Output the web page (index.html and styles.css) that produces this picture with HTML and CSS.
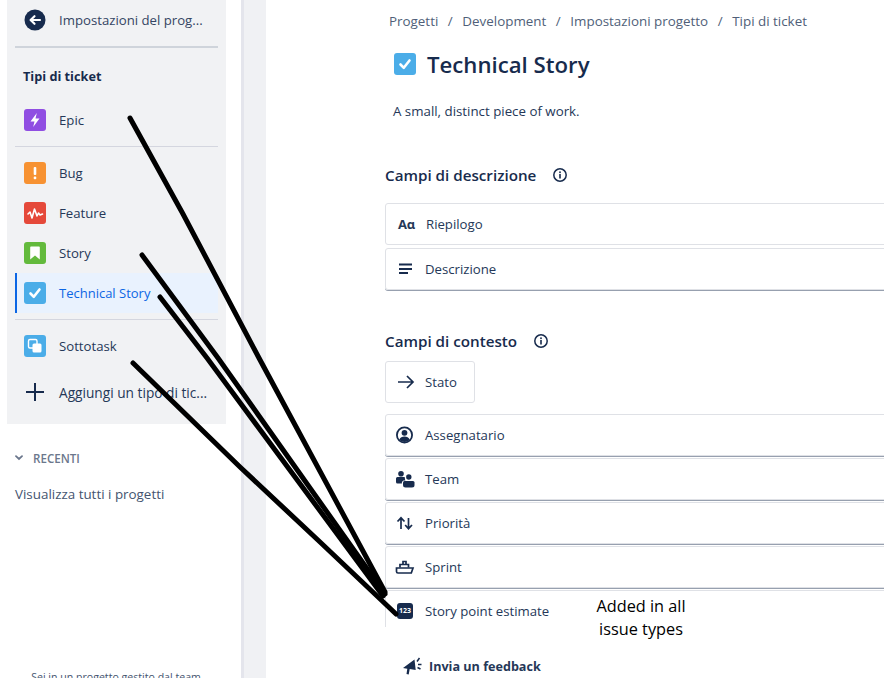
FILE: index.html
```html
<!DOCTYPE html>
<html lang="it">
<head>
  <meta charset="UTF-8" />
  <meta name="viewport" content="width=device-width, initial-scale=1" />
  <title>Tipi di ticket</title>
  <link rel="stylesheet" href="styles.css">
</head>
<body>
  <div class="app">
    <aside class="sidebar">
      <nav class="panel">
        <a class="nav-item back-item">
          <svg class="type-icon" viewBox="0 0 22 22"><circle cx="11" cy="11" r="10.5" fill="#172b4d"/><path d="M16 11H7M10.5 7.2 6.600 11l3.900 3.800" fill="none" stroke="#fff" stroke-width="2.200" stroke-linecap="round" stroke-linejoin="round"/></svg>
          <span>Impostazioni del prog...</span>
        </a>
        <div class="panel-title">Tipi di ticket</div>
        <a class="nav-item">
          <svg class="type-icon" viewBox="0 0 22 22"><rect width="22" height="22" rx="3" fill="#904ee2"/><path d="M12.800 4 6.500 12.400h4L9.200 18l6.300-8.400h-4z" fill="#fff"/></svg>
          <span>Epic</span>
        </a>
        <div class="nav-sep"></div>
        <a class="nav-item">
          <svg class="type-icon" viewBox="0 0 22 22"><rect width="22" height="22" rx="3" fill="#f79232"/><rect x="9.700" y="5" width="2.600" height="8" rx="1" fill="#fff"/><rect x="9.700" y="14.600" width="2.600" height="2.600" rx="1" fill="#fff"/></svg>
          <span>Bug</span>
        </a>
        <a class="nav-item">
          <svg class="type-icon" viewBox="0 0 22 22"><rect width="22" height="22" rx="3" fill="#e5493a"/><path d="m4 12 2-2 2 6 2.500-9 2.500 7 1.500-3 1.500 2 2.500-1" fill="none" stroke="#fff" stroke-width="1.600" stroke-linejoin="round" stroke-linecap="round"/></svg>
          <span>Feature</span>
        </a>
        <a class="nav-item">
          <svg class="type-icon" viewBox="0 0 22 22"><rect width="22" height="22" rx="3" fill="#63ba3c"/><path d="M7 4.500h8a.8.8 0 0 1 .8.8V17.500l-4.800-3.900-4.800 3.900V5.300A.8.8 0 0 1 7 4.500z" fill="#fff"/></svg>
          <span>Story</span>
        </a>
        <a class="nav-item active">
          <svg class="type-icon" viewBox="0 0 22 22"><rect width="22" height="22" rx="3" fill="#4bade8"/><path d="m6.500 11.500 3.300 3.300 5.700-7.300" fill="none" stroke="#fff" stroke-width="2.600" stroke-linecap="round" stroke-linejoin="round"/></svg>
          <span>Technical Story</span>
        </a>
        <div class="nav-sep"></div>
        <a class="nav-item">
          <svg class="type-icon" viewBox="0 0 22 22"><rect width="22" height="22" rx="3" fill="#4bade8"/><rect x="4.500" y="4.500" width="8.500" height="8.500" rx="1.500" fill="#4bade8" stroke="#fff" stroke-width="1.400"/><rect x="8.500" y="8.500" width="9" height="9" rx="1.500" fill="#fff"/></svg>
          <span>Sottotask</span>
        </a>
        <a class="nav-item add-item">
          <svg class="type-icon" viewBox="0 0 22 22"><path d="M11 2v18M2 11h18" stroke="#172b4d" stroke-width="2"/></svg>
          <span>Aggiungi un tipo di tic...</span>
        </a>
      </nav>

      <div class="recent-head">
        <svg class="chevron" viewBox="0 0 8 6"><path d="M1 1.200 4 4l3-2.800" fill="none" stroke="#6b778c" stroke-width="1.800" stroke-linecap="round"/></svg>
        <span>RECENTI</span>
      </div>
      <a class="recent-link">Visualizza tutti i progetti</a>
      <p class="team-note">Sei in un progetto gestito dal team</p>
    </aside>

    <div class="gutter"></div>

    <main class="content">
      <div class="breadcrumb">
        <span>Progetti</span><i>/</i><span>Development</span><i>/</i><span>Impostazioni progetto</span><i>/</i><span>Tipi di ticket</span>
      </div>
      <div class="title-row">
        <svg class="type-icon" viewBox="0 0 22 22"><rect width="22" height="22" rx="3" fill="#4bade8"/><path d="m6.500 11.500 3.300 3.300 5.700-7.300" fill="none" stroke="#fff" stroke-width="2.600" stroke-linecap="round" stroke-linejoin="round"/></svg>
        <h1>Technical Story</h1>
      </div>
      <p class="description">A small, distinct piece of work.</p>

      <h2 class="section-head first">Campi di descrizione
        <svg class="info" viewBox="0 0 16 16"><circle cx="8" cy="8" r="6.200" fill="none" stroke="#172b4d" stroke-width="1.500"/><rect x="7.200" y="7" width="1.600" height="4.500" fill="#172b4d"/><rect x="7.200" y="4.400" width="1.600" height="1.700" fill="#172b4d"/></svg>
      </h2>
      <div class="field-list spaced">
        <div class="field flat">
          <span class="field-icon aa">Aɑ</span>
          <span>Riepilogo</span>
        </div>
        <div class="field">
          <svg class="field-icon" viewBox="0 0 20 20"><path d="M4 5.500h13M4 10h13M4 14h9" stroke="#172b4d" stroke-width="2"/></svg>
          <span>Descrizione</span>
        </div>
      </div>

      <h2 class="section-head second">Campi di contesto
        <svg class="info" viewBox="0 0 16 16"><circle cx="8" cy="8" r="6.200" fill="none" stroke="#172b4d" stroke-width="1.500"/><rect x="7.200" y="7" width="1.600" height="4.500" fill="#172b4d"/><rect x="7.200" y="4.400" width="1.600" height="1.700" fill="#172b4d"/></svg>
      </h2>
      <div class="field flat status">
        <svg class="field-icon" viewBox="0 0 20 20"><path d="M3 10h15M12 4l6 6-6 6" fill="none" stroke="#172b4d" stroke-width="1.700"/></svg>
        <span>Stato</span>
      </div>
      <div class="field-list context">
        <div class="field">
          <svg class="field-icon" viewBox="0 0 20 20"><circle cx="9.500" cy="10" r="7.600" fill="#fff" stroke="#172b4d" stroke-width="1.800"/><circle cx="9.500" cy="7.800" r="2.900" fill="#172b4d"/><path d="M4.300 14.800c.8-2.200 2.800-3.300 5.200-3.300s4.400 1.100 5.200 3.300a7.300 7.300 0 0 1-10.400 0z" fill="#172b4d"/></svg>
          <span>Assegnatario</span>
        </div>
        <div class="field">
          <svg class="field-icon" viewBox="0 0 20 20"><circle cx="6" cy="4.800" r="2.800" fill="#172b4d"/><circle cx="13.800" cy="8" r="2.700" fill="#172b4d"/><path d="M1 9.500a1.500 1.500 0 0 1 1.500-1.500h6.500a1.500 1.500 0 0 1 1 .6 4 4 0 0 0 .4 3H8.500a2.500 2.500 0 0 0-1.600 1.700v1.200H2.500A1.500 1.500 0 0 1 1 13z" fill="#172b4d"/><path d="M8 13.500a1.500 1.500 0 0 1 1.500-1.500h8.500a1.500 1.500 0 0 1 1.500 1.500v2.500a2.500 2.500 0 0 1-2.500 2.500h-6.500A2.500 2.500 0 0 1 8 16z" fill="#172b4d"/></svg>
          <span>Team</span>
        </div>
        <div class="field">
          <svg class="field-icon" viewBox="0 0 20 20"><path d="M6 16V5M2.500 8.500 6 4.800l3.500 3.700M13.500 5v11M10.200 12l3.300 3.700 3.500-3.700" fill="none" stroke="#172b4d" stroke-width="1.700"/></svg>
          <span>Priorità</span>
        </div>
        <div class="field">
          <svg class="field-icon" viewBox="0 0 20 20"><path d="M1.500 11h16.500l-1.700 5H3a1.500 1.500 0 0 1-1.500-1.500z" fill="none" stroke="#172b4d" stroke-width="1.700"/><path d="M5 10.500V7.500h8.500v3M8 7V4.500h3V7" fill="none" stroke="#172b4d" stroke-width="1.700"/></svg>
          <span>Sprint</span>
        </div>
        <div class="field last">
          <span class="field-icon badge">123</span>
          <span>Story point estimate</span>
        </div>
      </div>

      <a class="feedback">
        <svg class="feedback-icon" viewBox="0 0 20 20"><path d="M1 12 12.500 3.500l1.200 10.500-6-1-1 5.500-2.200-.6.800-5.200-3-.5z" fill="#172b4d"/><path d="M15 5.500 17.500 2M16 8.500h3.500M15.500 11.500l3 1.500" fill="none" stroke="#172b4d" stroke-width="1.500"/></svg>
        <span>Invia un feedback</span>
      </a>
    </main>
  </div>

  <svg class="scribble" viewBox="0 0 884 678">
    <g fill="none" stroke="#000" stroke-width="5" stroke-linecap="round" stroke-linejoin="round">
      <path d="M130 118 183 214 259 358 385 592"/>
      <path d="M142 255 218 358 385 594"/>
      <path d="M160 297 207 358 383 596"/>
      <path d="M133 363 240 467 320 542 396 614"/>
    </g>
  </svg>
  <div class="annotation">Added in all<br>issue types</div>
</body>
</html>
```

FILE: styles.css
```css
* {
  box-sizing: border-box;
}

html, body {
  margin: 0;
  height: 678px;
  overflow: hidden;
  background: #fff;
}

body {
  position: relative;
  font-family: "Open Sans", "Noto Sans", sans-serif;
  font-size: 13.2px;
  color: #172b4d;
}

.app {
  display: flex;
  height: 678px;
}

.sidebar {
  width: 241px;
  flex: none;
  padding-left: 7px;
  overflow: hidden;
}

.gutter {
  width: 25px;
  flex: none;
  background: #f0f1f4;
  border-left: 3px solid #e4e5ec;
}

.content {
  flex: 1;
  min-width: 0;
  padding: 11px 0 0 119px;
  overflow: hidden;
}

/* left panel */
.panel {
  width: 219px;
  height: 424px;
  background: #f1f2f4;
  padding: 0 8px;
}

.nav-item {
  display: flex;
  align-items: center;
  gap: 13px;
  height: 40px;
  padding-left: 9px;
  color: #253858;
  white-space: nowrap;
}

.back-item {
  height: 48px;
  padding-bottom: 6px;
  border-bottom: 2px solid #cfd4db;
  color: #344563;
}

.type-icon {
  width: 22px;
  height: 22px;
  flex: none;
}

.panel-title {
  height: 52px;
  padding-top: 19px;
  padding-left: 8px;
  font-weight: 700;
  font-size: 12.7px;
}

.nav-sep {
  height: 1px;
  margin: 6px 0;
  background: #d4d6df;
}

.nav-item.active {
  padding-left: 7px;
  border-left: 2px solid #0c66e4;
  background: #e9f2fe;
  color: #0c66e4;
  font-size: 13px;
}

.add-item {
  margin-top: 6px;
  font-size: 13.7px;
}

.recent-head {
  display: flex;
  align-items: center;
  gap: 10px;
  margin: 25px 0 0 8px;
  height: 18px;
  font-size: 11.6px;
  font-weight: 600;
  color: #6b778c;
}

.chevron {
  width: 8px;
  height: 6px;
}

.recent-link {
  display: block;
  margin: 18px 0 0 8px;
  height: 18px;
  line-height: 18px;
  font-size: 13.4px;
  color: #44546f;
}

.team-note {
  width: 218px;
  margin: 167px 0 0;
  text-align: center;
  font-size: 10.6px;
  color: #44546f;
  white-space: nowrap;
}

/* main column */
.breadcrumb {
  display: flex;
  height: 20px;
  align-items: center;
  padding-left: 4px;
  font-size: 13.4px;
  color: #505f79;
}

.breadcrumb i {
  width: 24px;
  font-style: normal;
  text-align: center;
}

.title-row {
  display: flex;
  align-items: center;
  gap: 11px;
  height: 36px;
  margin-top: 15px;
  padding-left: 9px;
}

h1 {
  margin: 0;
  font-size: 22.2px;
  font-weight: 600;
  color: #172b4d;
}

.description {
  margin: 19px 0 0 8px;
  height: 20px;
  line-height: 20px;
  font-size: 13.3px;
  color: #253858;
}

.section-head {
  display: flex;
  align-items: center;
  gap: 16px;
  height: 22px;
  margin: 0;
  font-size: 15.2px;
  font-weight: 600;
  color: #172b4d;
}

.section-head.first {
  margin-top: 43px;
}

.section-head.second {
  margin-top: 40px;
}

.info {
  width: 16px;
  height: 16px;
}

.field-list {
  display: flex;
  flex-direction: column;
  width: 620px;
}

.field-list.spaced {
  gap: 3px;
  margin-top: 17px;
}

.field-list.context {
  gap: 2px;
  margin-top: 11px;
}

.field {
  display: flex;
  align-items: center;
  gap: 10px;
  height: 42px;
  padding-left: 9px;
  border: 1px solid #dfe1e6;
  border-radius: 3px;
  box-shadow: 0 1px 0 #97a0af;
  color: #253858;
}

.field.flat {
  box-shadow: none;
}

.field.status {
  width: 90px;
  margin-top: 9px;
}

.field.last {
  height: 37px;
  padding-top: 4px;
  border-bottom: 0;
  border-right: 0;
  border-radius: 0;
  box-shadow: none;
}

.field-icon {
  width: 20px;
  height: 20px;
  flex: none;
}

.aa {
  width: 21px;
  padding-left: 2px;
  font-size: 13px;
  font-weight: 700;
  line-height: 20px;
  text-align: center;
}

.badge {
  width: 16px;
  height: 16px;
  margin: 0 2px;
  background: #172b4d;
  border-radius: 3px;
  color: #fff;
  font-size: 7px;
  font-weight: 700;
  line-height: 16px;
  text-align: center;
}

.feedback {
  display: flex;
  align-items: center;
  gap: 7px;
  height: 20px;
  margin: 29px 0 0 17px;
  font-size: 12.6px;
  font-weight: 700;
  color: #253858;
}

.feedback-icon {
  width: 20px;
  height: 20px;
}

/* hand-drawn notes over the screenshot */
.scribble {
  position: absolute;
  top: 0;
  left: 0;
  width: 884px;
  height: 678px;
  pointer-events: none;
}

.annotation {
  position: absolute;
  left: 571px;
  top: 595px;
  width: 140px;
  text-align: center;
  font-size: 16.3px;
  line-height: 23px;
  color: #000;
}
```
